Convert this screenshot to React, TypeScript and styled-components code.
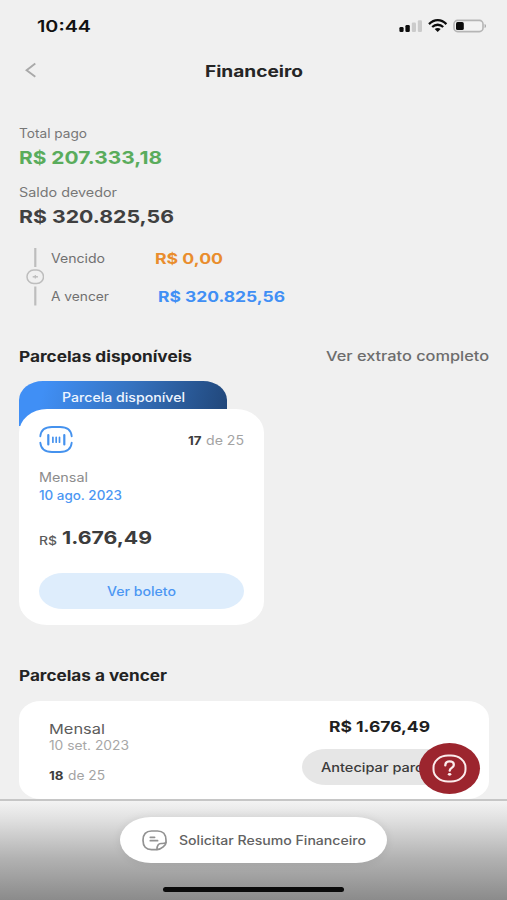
import React, { useLayoutEffect, useRef, useState } from "react";
import styled, { createGlobalStyle } from "styled-components";

const GlobalStyle = createGlobalStyle`
  * { box-sizing: border-box; }
  body { margin: 0; background: #f0f0f0; font-family: Inter, "Open Sans", sans-serif; }
  button { font-family: inherit; border: 0; padding: 0; margin: 0; background: none; }
`;

const TextBox = styled.span<{ $w: number; $size: number; $weight: number; $color: string; $low?: boolean }>`
  display: block;
  flex: none;
  width: ${(p) => p.$w}px;
  height: 20px;
  line-height: ${(p) => (p.$low ? 22 : 20)}px;
  text-align: left;
  white-space: nowrap;
  font-size: ${(p) => p.$size}px;
  font-weight: ${(p) => p.$weight};
  color: ${(p) => p.$color};
`;

const TextInner = styled.span`
  display: inline-block;
  transform-origin: 0 50%;
`;

type TextProps = { w: number; size?: number; weight?: number; color?: string; low?: boolean; children: string };

function Wide({ w, size = 12.4, weight = 400, color = "#6b6b6b", low, children }: TextProps) {
  const ref = useRef<HTMLSpanElement>(null);
  const [scale, setScale] = useState(1);
  useLayoutEffect(() => {
    if (ref.current) setScale(w / ref.current.getBoundingClientRect().width);
  }, []);
  return (
    <TextBox $w={w} $size={size} $weight={weight} $color={color} $low={low}>
      <TextInner ref={ref} style={{ transform: `scaleX(${scale})` }}>
        {children}
      </TextInner>
    </TextBox>
  );
}

const Screen = styled.main`
  width: 507px;
  height: 900px;
  overflow: hidden;
  display: flex;
  flex-direction: column;
  background: #f0f0f0;
`;

const StatusBar = styled.div`
  height: 52px;
  flex: none;
  display: flex;
  align-items: center;
  justify-content: space-between;
  padding: 0 20px 0 37px;
`;

const StatusIcons = styled.svg`
  width: 88px;
  height: 16px;
`;

const Header = styled.header`
  height: 37px;
  flex: none;
  display: grid;
  grid-template-columns: 1fr auto 1fr;
  align-items: center;
  padding: 0 24px 0 25px;
`;

const BackIcon = styled.svg`
  display: block;
  width: 12px;
  height: 16px;
  margin-top: -2px;
`;

const Content = styled.div`
  height: 710px;
  flex: none;
  overflow: hidden;
  padding: 0 18px 0 19px;
`;

const Summary = styled.section`
  padding-top: 34.5px;
  display: flex;
  flex-direction: column;
`;

const SummaryItem = styled.div`
  height: 59.2px;
  display: flex;
  flex-direction: column;
  gap: 3.5px;
`;

const Breakdown = styled.div`
  display: flex;
  align-items: flex-start;
  gap: 7px;
  padding: 6px 0 0 7px;
  height: 66px;
`;

const Connector = styled.svg`
  width: 18px;
  height: 58px;
  flex: none;
`;

const BreakdownRows = styled.div`
  display: flex;
  flex-direction: column;
  gap: 18.3px;
`;

const BreakdownRow = styled.div<{ $gap: number }>`
  display: flex;
  gap: ${(p) => p.$gap}px;
`;

const SectionHead = styled.div`
  display: flex;
  justify-content: space-between;
  height: 20px;
`;

const AvailableSection = styled.section`
  margin-top: 38.6px;
`;

const UpcomingSection = styled.section`
  margin-top: 40.4px;
`;

const Tab = styled.div`
  margin-top: 15px;
  width: 208px;
  height: 45px;
  padding: 6.2px 0 0 43px;
  border-radius: 24px 24px 0 0 / 19px 19px 0 0;
  background: linear-gradient(105deg, #408ff5 12%, #3572bf 52%, #204577 100%);
`;

const Card = styled.article`
  position: relative;
  width: 245px;
  height: 216px;
  margin-top: -17px;
  padding: 17px 20px 0 20px;
  background: #fff;
  border-radius: 28px / 24px;
`;

const CardTop = styled.div`
  height: 27px;
  display: flex;
  align-items: center;
  justify-content: space-between;
`;

const BarcodeIcon = styled.svg`
  width: 34px;
  height: 27px;
`;

const Counter = styled.div`
  display: flex;
  gap: 5px;
  height: 20px;
`;

const CardInfo = styled.div`
  margin-top: 14.7px;
  height: 38px;
  display: flex;
  flex-direction: column;
  & > * { height: 18px; }
`;

const Price = styled.div`
  margin-top: 22px;
  height: 20px;
  display: flex;
  gap: 5px;
  & > :first-child { margin-top: 3px; }
`;

const BoletoButton = styled.button`
  display: flex;
  align-items: center;
  justify-content: center;
  width: 205px;
  height: 36px;
  margin-top: 25px;
  border-radius: 24px / 18px;
  background: #deedfc;
`;

const Row = styled.article`
  margin-top: 15px;
  height: 98.5px;
  width: 470px;
  display: flex;
  justify-content: space-between;
  padding: 17.5px 23.5px 0 29.5px;
  background: #fff;
  border-radius: 22px / 18px;
`;

const RowInfo = styled.div`
  display: flex;
  flex-direction: column;
  & > :nth-child(2) { margin-top: -3.3px; }
  & > :nth-child(3) { margin-top: 10px; }
`;

const RowAction = styled.div`
  width: 164px;
  display: flex;
  flex-direction: column;
  & > :first-child { margin: -2px 0 12.5px 27.5px; }
`;

const AdvanceButton = styled.button`
  width: 164px;
  height: 36px;
  flex: none;
  display: flex;
  align-items: center;
  padding-left: 19px;
  border-radius: 24px / 18px;
  background: #e6e6e6;
`;

const HelpButton = styled.button`
  position: absolute;
  left: 419px;
  top: 743px;
  width: 61px;
  height: 51px;
  border-radius: 50%;
  background: #9c252e;
  display: grid;
  place-items: center;
`;

const HelpIcon = styled.svg`
  width: 35px;
  height: 29px;
`;

const Footer = styled.footer`
  height: 101px;
  flex: none;
  border-top: 2px solid #c6c6c6;
  background: linear-gradient(#f3f3f3 0%, #e1e1e1 18%, #b2b2b2 58%, #8b8b8b 100%);
  display: flex;
  flex-direction: column;
  align-items: center;
`;

const ResumoButton = styled.button`
  width: 267px;
  height: 46px;
  margin: 16px 0 0 0;
  padding-left: 22px;
  display: flex;
  align-items: center;
  gap: 12px;
  border-radius: 31px / 23px;
  background: #fff;
  box-shadow: 0 0 10px rgba(0, 0, 0, 0.08);
`;

const NoteIcon = styled.svg`
  width: 25px;
  height: 21px;
`;

const HomeIndicator = styled.div`
  width: 181px;
  height: 5px;
  margin-top: 24px;
  border-radius: 3px;
  background: #0b0b0b;
`;

export default function App() {
  return (
    <Screen>
      <GlobalStyle />
      <StatusBar>
        <Wide w={54} size={16} weight={600} color="#111">10:44</Wide>
        <StatusIcons viewBox="0 0 88 16">
          <g fill="#0c0c0c">
            <rect x="0.400" y="9" width="4.2" height="5" rx="1.3" />
            <rect x="6.400" y="7" width="4.4" height="7" rx="1.3" />
          </g>
          <g fill="#cbcbcb">
            <rect x="12.800" y="4.5" width="4.2" height="9.5" rx="1.2" />
            <rect x="18.800" y="2.2" width="4.2" height="11.8" rx="1.2" />
          </g>
          <g fill="none" stroke="#0c0c0c" strokeWidth="2.3">
            <path d="M30 6.1C35.2.9 42.2.9 47.400 6.1" />
            <path d="M33.200 9C36.400 6 41 6 44.200 9" />
          </g>
          <path d="M35.700 11.100c1.8-1.500 4.200-1.500 6 0l-3 2.900z" fill="#0c0c0c" />
          <rect x="55" y="2.4" width="29" height="11.2" rx="3.6" fill="#f3f3f3" stroke="#b5b5b5" strokeWidth="1.6" />
          <rect x="57" y="4.100" width="7.8" height="7.9" rx="1.6" fill="#0c0c0c" />
          <path d="M85.600 6c1.800.5 1.800 3.500 0 4z" fill="#a5a5a5" />
        </StatusIcons>
      </StatusBar>

      <Header>
        <BackIcon viewBox="0 0 12 16">
          <path d="M10.300 1.600 1.600 8.200 10.300 14.700" fill="none" stroke="#a9a9a9" strokeWidth="1.9" />
        </BackIcon>
        <Wide w={98} size={15.4} weight={700} color="#252525" low>Financeiro</Wide>
      </Header>

      <Content>
        <Summary>
          <SummaryItem>
            <Wide w={68} color="#777">Total pago</Wide>
            <Wide w={143} size={18} weight={700} color="#5aac5c" low>R$ 207.333,18</Wide>
          </SummaryItem>
          <SummaryItem>
            <Wide w={98} color="#777">Saldo devedor</Wide>
            <Wide w={155} size={18} weight={700} color="#404040" low>R$ 320.825,56</Wide>
          </SummaryItem>
          <Breakdown>
            <Connector viewBox="0 0 18 58">
              <g fill="none" stroke="#bdbdbd">
                <path d="M9.300 0v19M9.300 38.500v19" strokeWidth="2.2" />
                <rect x="1" y="22" width="16.500" height="13.500" rx="6.700" strokeWidth="1.500" />
                <path d="M6.700 28.800h5.200" strokeWidth="1.500" />
                <path d="M9.300 27v3.600" strokeWidth="1.200" />
              </g>
            </Connector>
            <BreakdownRows>
              <BreakdownRow $gap={50}>
                <Wide w={54} color="#707070" low>Vencido</Wide>
                <Wide w={68} size={14.4} weight={700} color="#e98d2d" low>R$ 0,00</Wide>
              </BreakdownRow>
              <BreakdownRow $gap={49}>
                <Wide w={58} color="#707070" low>A vencer</Wide>
                <Wide w={127} size={14.4} weight={700} color="#408ff5" low>R$ 320.825,56</Wide>
              </BreakdownRow>
            </BreakdownRows>
          </Breakdown>
        </Summary>

        <AvailableSection>
          <SectionHead>
            <Wide w={173} size={14.8} weight={700} color="#232323" low>Parcelas disponíveis</Wide>
            <Wide w={163} size={13.4} weight={500} color="#6d6d6d">Ver extrato completo</Wide>
          </SectionHead>
          <Tab>
            <Wide w={123} size={12.5} weight={500} color="#eef5ff">Parcela disponível</Wide>
          </Tab>
          <Card>
            <CardTop>
              <BarcodeIcon viewBox="0 0 34 27">
                <g fill="none" stroke="#4592ee" strokeLinecap="round">
                  <path d="M1.300 10.300C1.800 4.500 6 1 13 1h8c7 0 11.200 3.500 11.700 9.300M1.300 16.700C1.800 22.500 6 26 13 26h8c7 0 11.200-3.500 11.700-9.300" strokeWidth="1.800" />
                  <path d="M9.300 9v9.500M25.300 9v9.500" strokeWidth="2.200" />
                  <path d="M13.900 11.300v4.900M17.200 11.300v4.900M20.500 11.300v4.900" strokeWidth="1.700" />
                </g>
              </BarcodeIcon>
              <Counter>
                <Wide w={13.5} weight={700} color="#3e3e3e" low>17</Wide>
                <Wide w={38} color="#a3a3a3" low>de 25</Wide>
              </Counter>
            </CardTop>
            <CardInfo>
              <Wide w={49} color="#8c8c8c">Mensal</Wide>
              <Wide w={83} weight={500} color="#4c97f3">10 ago. 2023</Wide>
            </CardInfo>
            <Price>
              <Wide w={18} size={11.3} weight={500} color="#5b5b5b">R$</Wide>
              <Wide w={90} size={17.800} weight={700} color="#3c3c3c">1.676,49</Wide>
            </Price>
            <BoletoButton>
              <Wide w={69} weight={500} color="#4c97f3" low>Ver boleto</Wide>
            </BoletoButton>
          </Card>
        </AvailableSection>

        <UpcomingSection>
          <SectionHead>
            <Wide w={148} size={14.8} weight={700} color="#232323">Parcelas a vencer</Wide>
          </SectionHead>
          <Row>
            <RowInfo>
              <Wide w={56} size={13.700} color="#5c5c5c" low>Mensal</Wide>
              <Wide w={80} color="#a7a7a7" low>10 set. 2023</Wide>
              <Counter>
                <Wide w={14.5} weight={700} color="#3e3e3e" low>18</Wide>
                <Wide w={37} color="#a3a3a3" low>de 25</Wide>
              </Counter>
            </RowInfo>
            <RowAction>
              <Wide w={101} size={15} weight={700} color="#202020" low>R$ 1.676,49</Wide>
              <AdvanceButton>
                <Wide w={123} weight={500} color="#3b3b3b" low>Antecipar parcela</Wide>
              </AdvanceButton>
            </RowAction>
          </Row>
        </UpcomingSection>
      </Content>

      <Footer>
        <ResumoButton>
          <NoteIcon viewBox="0 0 25 21">
            <g fill="none" stroke="#929292" strokeWidth="1.700" strokeLinecap="round" strokeLinejoin="round">
              <path d="M15 19.600H9.500C4 19.600 1 16.500 1 10.300S4 1 9.500 1h6C21 1 24 4.100 24 10.300v2.500c0 2-4.500 6.800-9 6.800z" />
              <path d="M15 19.300c0-4 1.500-5.800 4-5.800 2.500 0 3.800.2 4.800-1" />
              <path d="M8.300 7.300h4.300M8.300 10.700h7.300" />
            </g>
          </NoteIcon>
          <Wide w={187} weight={500} color="#626262" low>Solicitar Resumo Financeiro</Wide>
        </ResumoButton>
        <HomeIndicator />
      </Footer>

      <HelpButton aria-label="Ajuda">
        <HelpIcon viewBox="0 0 35 29">
          <g fill="none" stroke="#fbecec" strokeLinecap="round">
            <rect x="1.500" y="1.500" width="32" height="26" rx="14.500" ry="12" strokeWidth="2" />
            <path d="M13.300 11.400c.1-2.600 1.800-4 4.300-4 2.400 0 4.200 1.300 4.200 3.500 0 3-4.100 2.900-4.100 5.800" strokeWidth="2.300" />
          </g>
          <ellipse cx="17.600" cy="20.300" rx="1.800" ry="1.400" fill="#fbecec" />
        </HelpIcon>
      </HelpButton>
    </Screen>
  );
}
